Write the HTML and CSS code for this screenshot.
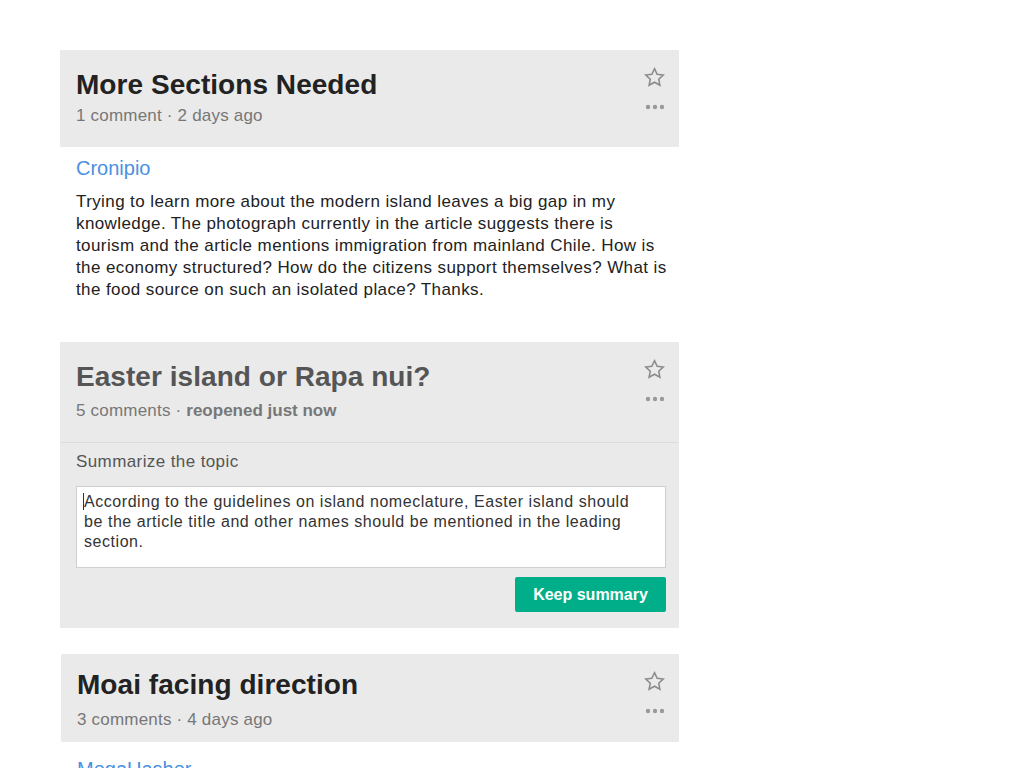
FILE: index.html
```html
<!DOCTYPE html>
<html>
<head>
<meta charset="utf-8">
<link rel="stylesheet" href="styles.css">
</head>
<body>
<div class="list">
  <section class="topic">
    <header class="topic-head">
      <div class="topic-info">
        <h2 class="topic-title">More Sections Needed</h2>
        <div class="topic-meta">1 comment · 2 days ago</div>
      </div>
      <div class="topic-actions">
        <svg class="star" viewBox="0 0 24 24" width="23" height="23"><path d="M12 2.8l2.75 5.85 6.35.75-4.7 4.4 1.25 6.3L12 16.95 6.35 20.1l1.25-6.3-4.7-4.4 6.35-.75z" fill="none" stroke="#8a8a8a" stroke-width="1.6" stroke-linejoin="miter"/></svg>
        <svg class="dots" viewBox="0 0 20 6" width="20" height="6"><circle cx="3" cy="3" r="2.2" fill="#999"/><circle cx="10" cy="3" r="2.2" fill="#999"/><circle cx="17" cy="3" r="2.2" fill="#999"/></svg>
      </div>
    </header>
    <div class="topic-body">
      <a class="author" href="#">Cronipio</a>
      <p class="post">Trying to learn more about the modern island leaves a big gap in my knowledge. The photograph currently in the article suggests there is tourism and the article mentions immigration from mainland Chile. How is the economy structured? How do the citizens support themselves? What is the food source on such an isolated place? Thanks.</p>
    </div>
  </section>

  <section class="topic topic-editing">
    <header class="topic-head topic-head-tall">
      <div class="topic-info">
        <h2 class="topic-title muted">Easter island or Rapa nui?</h2>
        <div class="topic-meta">5 comments · <b>reopened just now</b></div>
      </div>
      <div class="topic-actions">
        <svg class="star" viewBox="0 0 24 24" width="23" height="23"><path d="M12 2.8l2.75 5.85 6.35.75-4.7 4.4 1.25 6.3L12 16.95 6.35 20.1l1.25-6.3-4.7-4.4 6.35-.75z" fill="none" stroke="#8a8a8a" stroke-width="1.6" stroke-linejoin="miter"/></svg>
        <svg class="dots" viewBox="0 0 20 6" width="20" height="6"><circle cx="3" cy="3" r="2.2" fill="#999"/><circle cx="10" cy="3" r="2.2" fill="#999"/><circle cx="17" cy="3" r="2.2" fill="#999"/></svg>
      </div>
    </header>
    <div class="summary">
      <label class="summary-label">Summarize the topic</label>
      <div class="summary-box"><span class="caret"></span>According to the guidelines on island nomeclature, Easter island should be the article title and other names should be mentioned in the leading section.</div>
      <div class="summary-actions">
        <button class="btn-keep">Keep summary</button>
      </div>
    </div>
  </section>

  <section class="topic topic-shift">
    <header class="topic-head topic-head-short">
      <div class="topic-info">
        <h2 class="topic-title">Moai facing direction</h2>
        <div class="topic-meta">3 comments · 4 days ago</div>
      </div>
      <div class="topic-actions">
        <svg class="star" viewBox="0 0 24 24" width="23" height="23"><path d="M12 2.8l2.75 5.85 6.35.75-4.7 4.4 1.25 6.3L12 16.95 6.35 20.1l1.25-6.3-4.7-4.4 6.35-.75z" fill="none" stroke="#8a8a8a" stroke-width="1.6" stroke-linejoin="miter"/></svg>
        <svg class="dots" viewBox="0 0 20 6" width="20" height="6"><circle cx="3" cy="3" r="2.2" fill="#999"/><circle cx="10" cy="3" r="2.2" fill="#999"/><circle cx="17" cy="3" r="2.2" fill="#999"/></svg>
      </div>
    </header>
    <div class="topic-body topic-body-low">
      <a class="author" href="#">MegaUasher</a>
    </div>
  </section>
</div>
</body>
</html>
```

FILE: styles.css
```css
html, body {
  margin: 0;
  padding: 0;
  background: #fff;
}
body {
  font-family: "Liberation Sans", Arial, Helvetica, sans-serif;
  color: #222;
  overflow: hidden;
}
.list {
  width: 619px;
  padding: 50px 0 0 60px;
  display: flex;
  flex-direction: column;
}
.topic-head {
  background: #eaeaea;
  display: flex;
  justify-content: space-between;
  align-items: flex-start;
  padding: 14px 13px 20px 16px;
  border-radius: 1px;
}
.topic-info {
  padding-top: 5px;
}
.topic-head-tall .topic-info {
  padding-top: 5px;
}
.topic-head-tall {
  padding-bottom: 20px;
}
.topic-head-short .topic-info {
  padding-top: 1px;
}
.topic-head-short {
  padding-bottom: 11px;
}
.topic-title {
  margin: 0;
  font-size: 28px;
  line-height: 32px;
  font-weight: bold;
  color: #222;
  letter-spacing: 0.05px;
}
.topic-title.muted {
  color: #555;
}
.topic-meta {
  margin-top: 4px;
  font-size: 17px;
  line-height: 22px;
  color: #777;
  letter-spacing: 0.2px;
}
.topic-head-tall .topic-meta {
  margin-top: 7px;
}
.topic-head-short .topic-meta {
  margin-top: 8px;
}
.topic-meta b {
  font-weight: bold;
  color: #777;
  letter-spacing: 0;
}
.topic-actions {
  display: flex;
  flex-direction: column;
  align-items: center;
  gap: 15px;
  margin-top: 2px;
  width: 23px;
}
.star {
  display: block;
}
.dots {
  display: block;
}
.topic-body {
  padding: 9px 4px 0 16px;
}
.topic-body-low {
  padding-top: 15px;
}
.author {
  display: block;
  font-size: 20px;
  line-height: 24px;
  color: #4a90e2;
  text-decoration: none;
}
.post {
  margin: 11px 0 0;
  font-size: 17px;
  line-height: 22px;
  color: #222;
  letter-spacing: 0.4px;
}
.topic-editing {
  margin-top: 41px;
}
.topic-editing .topic-head {
  border-bottom: 1px solid #dcdcdc;
}
.summary {
  background: #eaeaea;
  padding: 8px 13px 16px 16px;
}
.summary-label {
  display: block;
  font-size: 17px;
  line-height: 22px;
  color: #555;
  letter-spacing: 0.4px;
}
.summary-box {
  margin-top: 13px;
  background: #fff;
  border: 1px solid #cfcfcf;
  height: 82px;
  box-sizing: border-box;
  padding: 5px 24px 5px 7px;
  font-size: 16px;
  line-height: 20px;
  color: #333;
  letter-spacing: 0.55px;
}
.caret {
  display: inline-block;
  width: 1px;
  height: 17px;
  background: #333;
  vertical-align: -3px;
  margin-left: -1px;
}
.summary-actions {
  display: flex;
  justify-content: flex-end;
  margin-top: 9px;
}
.btn-keep {
  font-family: "Liberation Sans", Arial, Helvetica, sans-serif;
  font-size: 16px;
  font-weight: bold;
  color: #fff;
  background: #00af89;
  border: 0;
  border-radius: 2px;
  width: 151px;
  height: 35px;
  padding: 0;
}
.topic-shift {
  margin-top: 26px;
  margin-left: 1px;
}
```
